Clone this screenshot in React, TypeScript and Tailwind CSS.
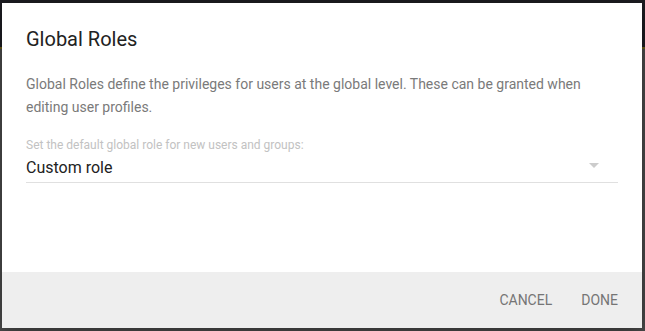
export default function App() {
  return (
    <div className="relative w-[645px] h-[331px] overflow-hidden bg-[#4b4b4b]" style={{ fontFamily: "Roboto, 'Noto Sans', sans-serif" }}>
      <div className="absolute left-0 top-0 w-full h-[47px] bg-[#1d1d22]" />
      <div className="absolute left-0 top-[47px] w-full h-[2px] bg-[#6b5d1a]" />
      <div className="absolute left-[2px] top-[3px] w-[640px] h-[325px] bg-white flex flex-col shadow-[0_4px_20px_rgba(0,0,0,0.4)]">
        <div className="flex-1 flex flex-col">
          <h2 className="pl-[24px] pt-[22px] text-[20px] leading-[28px] text-[#222222] font-normal">Global Roles</h2>
          <p className="pl-[24px] pr-[24px] pt-[20px] text-[14px] leading-[23px] text-[#7a7a7a]">
            Global Roles define the privileges for users at the global level. These can be granted when editing user profiles.
          </p>
          <div className="mx-[24px] mt-[18px]">
            <div className="text-[12px] leading-[16px] text-[#c2c2c2]">Set the default global role for new users and groups:</div>
            <div className="mt-[3px] flex items-center justify-between border-b border-[#e0e0e0] pb-[2px]">
              <span className="text-[16px] leading-[24px] text-[#222222]">Custom role</span>
              <span className="mr-[19px] mb-[5px] w-0 h-0 border-l-[5px] border-r-[5px] border-t-[5px] border-l-transparent border-r-transparent border-t-[#cccccc]" />
            </div>
          </div>
        </div>
        <div className="h-[56px] bg-[#eeeeee] flex items-center justify-end pr-[24px] gap-[29px] text-[14px] text-[#757575]">
          <button className="uppercase">Cancel</button>
          <button className="uppercase">Done</button>
        </div>
      </div>
    </div>
  );
}
